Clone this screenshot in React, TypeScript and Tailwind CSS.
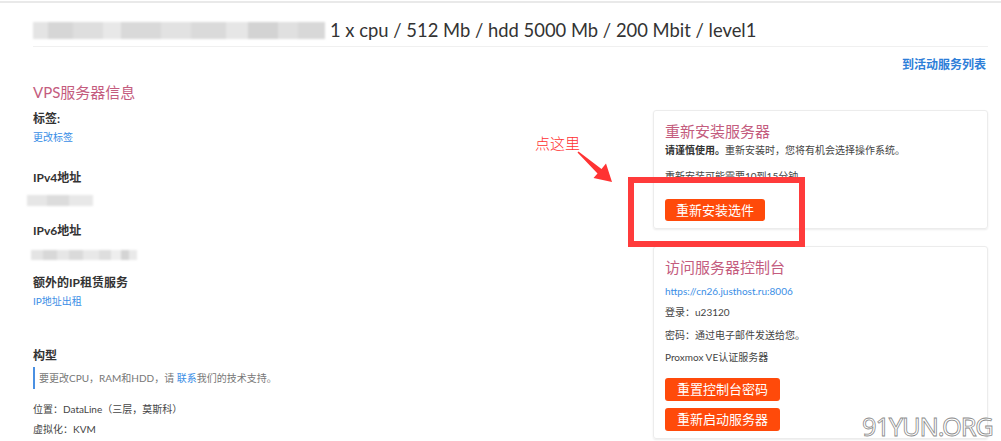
import React from "react";

const Blur = ({ blocks, className }: { blocks: [number, string][]; className?: string }) => (
  <div className={"flex blur-[1.2px] " + (className ?? "")}>
    {blocks.map(([w, c], i) => (
      <div key={i} style={{ width: w, backgroundColor: c }} className="h-full" />
    ))}
  </div>
);

const Btn = ({ children, className }: { children: React.ReactNode; className?: string }) => (
  <div className={"flex items-center justify-center px-[11px] bg-[#ff4a0a] text-white text-[13px] rounded-[3px] leading-none " + (className ?? "")}>
    {children}
  </div>
);

export default function App() {
  return (
    <div className="relative w-[1001px] h-[441px] overflow-hidden bg-white text-[#333] font-['Lato',_'Noto_Sans_CJK_SC',_sans-serif]">
      <div className="h-[1px]" />
      <div className="h-[2px] bg-[#e9e9e9]" />
      <div className="px-[33px] pr-[13px]">
        <div className="flex items-center h-[44px] pt-[11px] border-b border-[#f0f0f0]">
          <Blur
            className="h-[17px] mr-[5px]"
            blocks={[
              [15, "#e4e4e4"],
              [25, "#d6d6d6"],
              [30, "#dedede"],
              [18, "#e8e8e8"],
              [40, "#d9d9d9"],
              [30, "#e2e2e2"],
              [35, "#dadada"],
              [22, "#e6e6e6"],
              [30, "#d3d3d3"],
              [20, "#e0e0e0"],
              [27, "#d8d8d8"],
            ]}
          />
          <span className="text-[18.4px] text-[#333] leading-none">1 x cpu / 512 Mb / hdd 5000 Mb / 200 Mbit / level1</span>
        </div>
      </div>
      <div className="flex justify-end pr-[15px] mt-[10px]">
        <span className="text-[12px] font-bold text-[#2d7ed8] leading-[16px]">到活动服务列表</span>
      </div>

      <div className="flex pl-[33px] pr-[13px]">
        <div className="flex-1 flex flex-col">
          <div className="mt-[9px] text-[15px] leading-[20px] text-[#c45c7e]">VPS服务器信息</div>
          <div className="mt-[9px] text-[12px] font-bold leading-[16px] text-[#333]">标签:</div>
          <div className="mt-[3px] text-[10px] leading-[14px] text-[#3a8ee6]">更改标签</div>
          <div className="mt-[26px] text-[12px] font-bold leading-[16px]">IPv4地址</div>
          <Blur
            className="mt-[9px] h-[11px] -ml-[6px]"
            blocks={[
              [20, "#e6e6e6"],
              [22, "#dcdcdc"],
              [24, "#e8e8e8"],
            ]}
          />
          <div className="mt-[17px] text-[12px] font-bold leading-[16px]">IPv6地址</div>
          <Blur
            className="mt-[11px] h-[10px] -ml-[2px]"
            blocks={[
              [12, "#e4e4e4"],
              [14, "#d8d8d8"],
              [12, "#e6e6e6"],
              [14, "#dadada"],
              [16, "#e8e8e8"],
              [12, "#dedede"],
              [10, "#eeeeee"],
              [8, "#d4d4d4"],
              [8, "#e9e9e9"],
            ]}
          />
          <div className="mt-[15px] text-[12px] font-bold leading-[16px]">额外的IP租赁服务</div>
          <div className="mt-[3px] text-[10px] leading-[14px] text-[#3a8ee6]">IP地址出租</div>
          <div className="mt-[40px] text-[12px] font-bold leading-[16px]">构型</div>
          <div className="mt-[3px] h-[22px] border-l-[2px] border-[#4a90e2] pl-[4px] flex items-center text-[10px] text-[#777]">
            要更改CPU，RAM和HDD，请&nbsp;<span className="text-[#3a8ee6]">联系</span>我们的技术支持。
          </div>
          <div className="mt-[13px] text-[10px] leading-[14px] text-[#444]">位置：DataLine（三层，莫斯科）</div>
          <div className="mt-[6px] text-[10px] leading-[14px] text-[#444]">虚拟化：KVM</div>
        </div>

        <div className="w-[335px] flex flex-col">
          <div className="mt-[37px] border border-[#ececec] rounded-[3px] shadow-[0_1px_2px_rgba(0,0,0,0.08)] px-[11px] pt-[10px] pb-[7px] flex flex-col items-start">
            <div className="text-[15px] leading-[20px] text-[#c45c7e]">重新安装服务器</div>
            <div className="mt-[2px] text-[10px] leading-[14px] text-[#444]">
              <span className="font-bold text-[#333]">请谨慎使用。</span>重新安装时，您将有机会选择操作系统。
            </div>
            <div className="mt-[12px] text-[10px] leading-[14px] text-[#444]">重新安装可能需要10到15分钟。</div>
            <Btn className="mt-[16px] h-[22px]">重新安装选件</Btn>
          </div>

          <div className="mt-[17px] border border-[#ececec] rounded-[3px] shadow-[0_1px_2px_rgba(0,0,0,0.08)] px-[11px] pt-[10px] pb-[7px] flex flex-col items-start">
            <div className="text-[15px] leading-[20px] text-[#c45c7e]">访问服务器控制台</div>
            <div className="mt-[7px] text-[10px] leading-[14px] text-[#3a8ee6]">https://cn26.justhost.ru:8006</div>
            <div className="mt-[7px] text-[10px] leading-[14px] text-[#444]">登录：u23120</div>
            <div className="mt-[9px] text-[10px] leading-[14px] text-[#444]">密码：通过电子邮件发送给您。</div>
            <div className="mt-[8px] text-[10px] leading-[14px] text-[#444]">Proxmox VE认证服务器</div>
            <Btn className="mt-[14px] h-[23px] px-[12px]">重置控制台密码</Btn>
            <Btn className="mt-[7px] h-[23px] px-[12px]">重新启动服务器</Btn>
          </div>
        </div>
      </div>

      {/* annotation */}
      <div className="absolute left-[535px] top-[133px] text-[15px] leading-[20px] text-[#ff3030] font-['Noto_Sans_CJK_SC',_sans-serif] font-light">
        点这里
      </div>
      <svg className="absolute left-0 top-0 pointer-events-none" width="1001" height="441">
        <polygon
          points="577.5,152.5 597.5,173.5 593.5,178 612,182 606,163.5 601.5,169 578.5,151.5"
          fill="#ff3333"
        />
      </svg>
      <div className="absolute left-[628px] top-[177px] w-[177px] h-[70px] border-[6px] border-[#ff3b3b]" />

      {/* watermark */}
      <div className="absolute left-[862px] top-[414px] text-[25.5px] leading-none tracking-[-1.2px] text-white [-webkit-text-stroke:0.8px_#8a8a8a] font-['Noto_Sans',_sans-serif] whitespace-nowrap">
        91YUN.ORG
      </div>
    </div>
  );
}
